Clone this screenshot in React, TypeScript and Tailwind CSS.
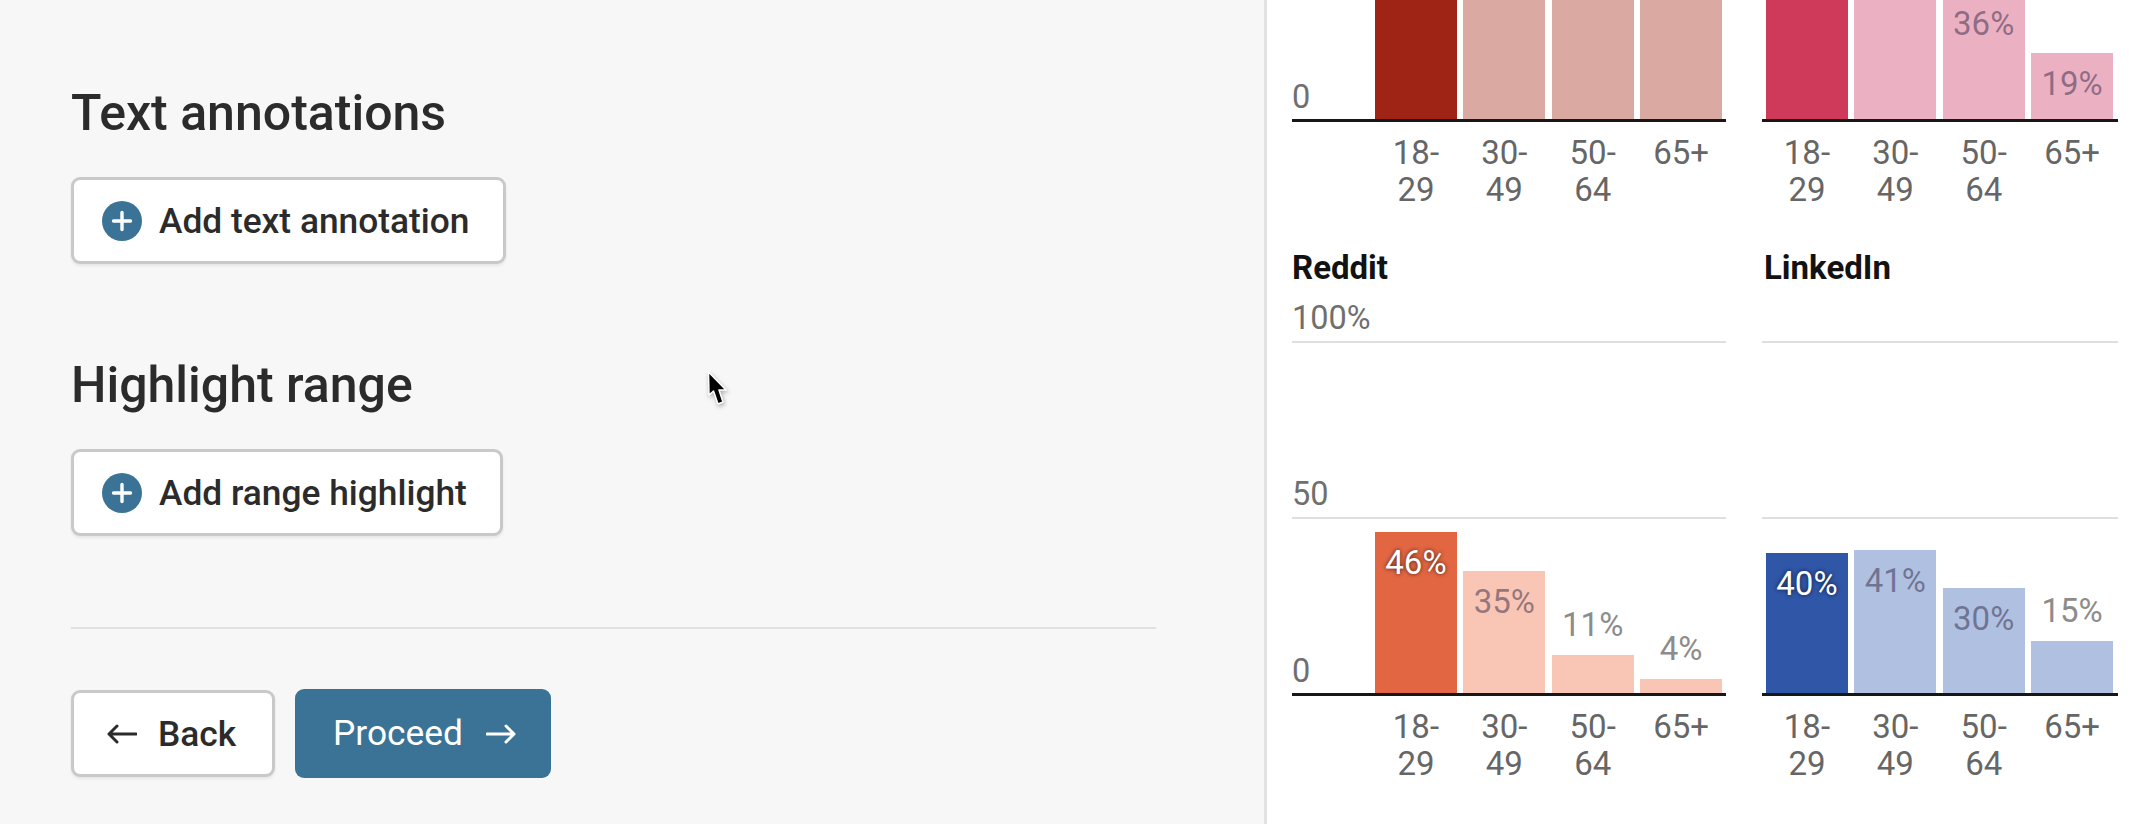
import { ReactNode } from 'react';

const ageGroups = [
    ['18-', '29'],
    ['30-', '49'],
    ['50-', '64'],
    ['65+'],
];

// px per percentage point on the charts
const SCALE = 3.5;

interface BarData {
    value: number;
    label?: string;
    outside?: boolean;
}

interface ChartProps {
    title?: string;
    showLabels?: boolean;
    strong: string;
    light: string;
    labelColor: string;
    bars: BarData[];
    wide?: boolean;
}

function PlusIcon() {
    return (
        <svg width="40" height="40" viewBox="0 0 40 40" className="shrink-0">
            <circle cx="20" cy="20" r="20" fill="#3a7396" />
            <path d="M20 11.5v17M11.5 20h17" stroke="#fff" strokeWidth="3.4" strokeLinecap="round" />
        </svg>
    );
}

function ArrowIcon({ left }: { left?: boolean }) {
    return (
        <svg width="30" height="20" viewBox="0 0 30 20" fill="none" stroke="currentColor" strokeWidth="3" strokeLinecap="round" strokeLinejoin="round" className="shrink-0">
            {left ? <path d="M29 10H2M10 2l-8 8 8 8" /> : <path d="M1 10h27M20 2l8 8-8 8" />}
        </svg>
    );
}

function OutlineButton({ children, className }: { children: ReactNode; className: string }) {
    return (
        <button className={`flex h-[87px] items-center rounded-[9px] border-[3px] border-[#c9c9c9] bg-white pt-[2px] text-[35.3px] font-medium text-[#2b2b2b] shadow-[0_2px_3px_rgba(0,0,0,0.07)] ${className}`}>
            {children}
        </button>
    );
}

function Chart({ title, showLabels, strong, light, labelColor, bars, wide }: ChartProps) {
    return (
        <div className="mb-10">
            <div className={`h-10 text-[33px] leading-10 font-bold text-[#121212] ${wide ? '' : 'pl-[2px]'}`}>{title}</div>
            <div className="grid">
                <div className="[grid-area:1/1] flex flex-col text-[32.5px] leading-[37px] text-[#6f6f6f]">
                    <div className="flex h-[53px] flex-col justify-end pb-[4px]">{showLabels && '100%'}</div>
                    <div className="h-[2px] bg-[#dfdfdf]" />
                    <div className="flex h-[174px] flex-col justify-end pb-[4px]">{showLabels && '50'}</div>
                    <div className="h-[2px] bg-[#dfdfdf]" />
                    <div className="flex h-[174px] flex-col justify-end pb-[3px]">{wide && '0'}</div>
                    <div className="h-[3px] bg-[#171717]" />
                </div>
                <div className={`[grid-area:1/1] flex items-end gap-[6.5px] pb-[3px] ${wide ? 'pl-[83px] pr-[4px]' : 'pl-[4px] pr-[5px]'}`}>
                    {bars.map((bar, i) => (
                        <div key={i} className="flex min-w-0 flex-1 flex-col text-center text-[33px] leading-[37px]">
                            {bar.outside && (
                                <div className="mb-[12px]" style={{ color: labelColor }}>{bar.label}</div>
                            )}
                            <div className="pt-3" style={{ height: bar.value * SCALE, backgroundColor: i === 0 ? strong : light }}>
                                {!bar.outside && bar.label && (
                                    <span
                                        className={i === 0 ? 'text-white [text-shadow:0_0_4px_rgba(0,0,0,0.7)]' : 'text-[#322846]/50'}
                                    >
                                        {bar.label}
                                    </span>
                                )}
                            </div>
                        </div>
                    ))}
                </div>
            </div>
            <div className={`mt-3 flex gap-[6.5px] text-center text-[33px] leading-[37px] text-[#666] ${wide ? 'pl-[83px] pr-[4px]' : 'pl-[4px] pr-[5px]'}`}>
                {ageGroups.map((group) => (
                    <div key={group[0]} className="flex-1">
                        {group.map((line) => (
                            <div key={line}>{line}</div>
                        ))}
                    </div>
                ))}
            </div>
        </div>
    );
}

export default function App() {
    return (
        <div className="relative flex h-[824px] w-[2148px] overflow-hidden bg-white font-['Roboto',sans-serif]">
            <div className="h-full w-[1267px] shrink-0 border-r-[3px] border-[#e2e2e2] bg-[#f7f7f7] pl-[71px] pt-[83px]">
                <h2 className="h-[60px] text-[50px] leading-[60px] font-medium text-[#2b2b2b]">Text annotations</h2>
                <OutlineButton className="mt-[34px] w-[435px] pl-[28px]">
                    <span className="-mt-[2px]"><PlusIcon /></span>
                    <span className="ml-[17px]">Add text annotation</span>
                </OutlineButton>

                <h2 className="mt-[91px] h-[60px] text-[50px] leading-[60px] font-medium text-[#2b2b2b]">Highlight range</h2>
                <OutlineButton className="mt-[34px] w-[432px] pl-[28px]">
                    <span className="-mt-[2px]"><PlusIcon /></span>
                    <span className="ml-[17px]">Add range highlight</span>
                </OutlineButton>

                <div className="mt-[91px] h-[2px] w-[1085px] bg-[#e0e0e0]" />

                <div className="mt-[60px] flex items-center gap-5">
                    <OutlineButton className="w-[204px] pl-[33px]">
                        <span className="-mt-[2px]"><ArrowIcon left /></span>
                        <span className="ml-[21px]">Back</span>
                    </OutlineButton>
                    <button className="flex h-[89px] w-[256px] items-center rounded-[9px] bg-[#3a7396] pl-[38px] text-[35.3px] font-normal text-white">
                        <span>Proceed</span>
                        <span className="ml-[23px]"><ArrowIcon /></span>
                    </button>
                </div>
            </div>

            <div className="h-full flex-1 overflow-hidden">
                <div className="mt-[-326px] grid grid-cols-[434px_356px] gap-x-[36px] pl-[25px]">
                    <Chart
                        wide
                        strong="#9f2415"
                        light="#daa9a2"
                        labelColor="#888"
                        bars={[{ value: 76 }, { value: 76 }, { value: 76 }, { value: 76 }]}
                    />
                    <Chart
                        strong="#cf3a5a"
                        light="#ebb1c2"
                        labelColor="#888"
                        bars={[{ value: 76 }, { value: 76 }, { value: 36, label: '36%' }, { value: 19, label: '19%' }]}
                    />
                    <Chart
                        wide
                        showLabels
                        title="Reddit"
                        strong="#e26642"
                        light="#f9c5b5"
                        labelColor="#8c8c8c"
                        bars={[
                            { value: 46, label: '46%' },
                            { value: 35, label: '35%' },
                            { value: 11, label: '11%', outside: true },
                            { value: 4, label: '4%', outside: true },
                        ]}
                    />
                    <Chart
                        title="LinkedIn"
                        strong="#3056a8"
                        light="#afc0e0"
                        labelColor="#8c8c8c"
                        bars={[
                            { value: 40, label: '40%' },
                            { value: 41, label: '41%' },
                            { value: 30, label: '30%' },
                            { value: 15, label: '15%', outside: true },
                        ]}
                    />
                </div>
            </div>

            {/* mouse pointer */}
            <svg width="34" height="46" viewBox="0 0 34 46" className="absolute left-[702px] top-[368px]">
                <path
                    d="M6.5 4l.5 23 4.5-4 4.5 13 5-2-4-12h7z"
                    fill="#000"
                    stroke="#fff"
                    strokeWidth="1.5"
                    strokeLinejoin="round"
                    style={{ filter: 'drop-shadow(1px 2px 2px rgba(0,0,0,0.3))' }}
                />
            </svg>
        </div>
    );
}
